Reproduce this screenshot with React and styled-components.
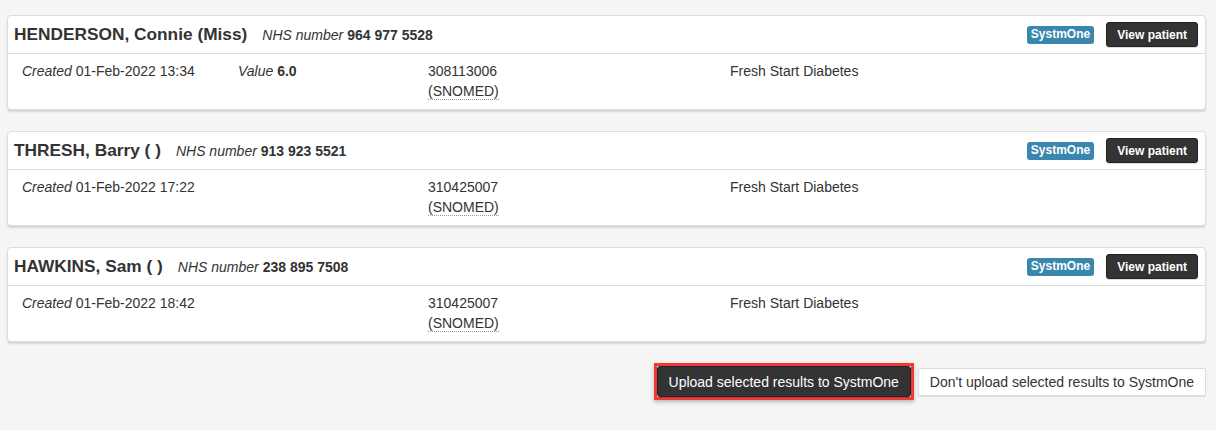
import styled, {createGlobalStyle} from "styled-components";

const GlobalStyle = createGlobalStyle`
    html, body {
        margin:0;
        padding:0;
        background:#f5f5f5;
        font-family:"Liberation Sans", Arial, sans-serif;
        font-size:14px;
        color:#333;
    }
`;

const Page = styled.div`
    padding:15px 10px 0 7px;
    height:430px;
    box-sizing:border-box;
`;

const Card = styled.div`
    background:#fff;
    border:1px solid #ddd;
    border-radius:4px;
    box-shadow:0 2px 2px rgba(0,0,0,0.13);
    margin-bottom:21px;
    height:95px;
    box-sizing:border-box;
`;

const CardHeader = styled.div`
    display:flex;
    align-items:center;
    height:37px;
    padding:0 7px 0 6px;
    border-bottom:1px solid #ddd;
`;

const Name = styled.span`
    font-size:17.3px;
    font-weight:bold;
    margin-right:15px;
`;

const Nhs = styled.span`
    font-size:14px;
    em { font-style:italic; }
    b { font-weight:bold; }
`;

const HeaderRight = styled.div`
    margin-left:auto;
    display:flex;
    align-items:center;
    gap:12px;
`;

const Badge = styled.span`
    background:#3a87ad;
    color:#fff;
    font-size:12px;
    font-weight:bold;
    padding:2px 4px 3px;
    border-radius:3px;
    line-height:13px;
`;

const DarkButton = styled.button`
    font-family:inherit;
    background:#333;
    color:#fff;
    border:1px solid #222;
    border-radius:3px;
    font-size:${p => p.$small ? "12px" : "14px"};
    font-weight:${p => p.$small ? "bold" : "normal"};
    height:${p => p.$small ? "25px" : "31px"};
    padding:0 ${p => p.$small ? "10px" : "11px"};
    box-shadow:0 1px 1px rgba(0,0,0,0.15);
`;

const CardBody = styled.div`
    display:grid;
    grid-template-columns:216px 190px 302px 1fr;
    padding:7px 15px 0 14px;
    line-height:20px;
    font-size:14px;
    em { font-style:italic; }
`;

const Abbr = styled.span`
    border-bottom:1px dotted #999;
`;

const Footer = styled.div`
    display:flex;
    justify-content:flex-end;
    align-items:center;
    gap:4px;
    margin-top:5px;
`;

const Highlight = styled.div`
    border:3px solid #f0393c;
    box-shadow:0 2px 4px rgba(0,0,0,0.25);
    display:flex;
`;

const LightButton = styled.button`
    font-family:inherit;
    background:#fff;
    color:#333;
    border:1px solid #ddd;
    border-radius:2px;
    font-size:14px;
    height:28px;
    padding:0 11px;
    box-shadow:0 1px 1px rgba(0,0,0,0.1);
`;

const results = [
    {name: "HENDERSON, Connie (Miss)", nhs: "964 977 5528", created: "01-Feb-2022 13:34", value: "6.0", code: "308113006"},
    {name: "THRESH, Barry ( )", nhs: "913 923 5521", created: "01-Feb-2022 17:22", code: "310425007"},
    {name: "HAWKINS, Sam ( )", nhs: "238 895 7508", created: "01-Feb-2022 18:42", code: "310425007"},
];

const App = () => {
    return (
        <>
            <GlobalStyle />
            <Page>
                {results.map((r, idx) => (
                    <Card key={idx}>
                        <CardHeader>
                            <Name>{r.name}</Name>
                            <Nhs><em>NHS number</em> <b>{r.nhs}</b></Nhs>
                            <HeaderRight>
                                <Badge>SystmOne</Badge>
                                <DarkButton $small>View patient</DarkButton>
                            </HeaderRight>
                        </CardHeader>
                        <CardBody>
                            <div><em>Created</em> {r.created}</div>
                            <div>{r.value && <><em>Value</em> <b>{r.value}</b></>}</div>
                            <div>{r.code}<br /><Abbr>(SNOMED)</Abbr></div>
                            <div>Fresh Start Diabetes</div>
                        </CardBody>
                    </Card>
                ))}
                <Footer>
                    <Highlight>
                        <DarkButton>Upload selected results to SystmOne</DarkButton>
                    </Highlight>
                    <LightButton>Don't upload selected results to SystmOne</LightButton>
                </Footer>
            </Page>
        </>
    );
};

export default App;
